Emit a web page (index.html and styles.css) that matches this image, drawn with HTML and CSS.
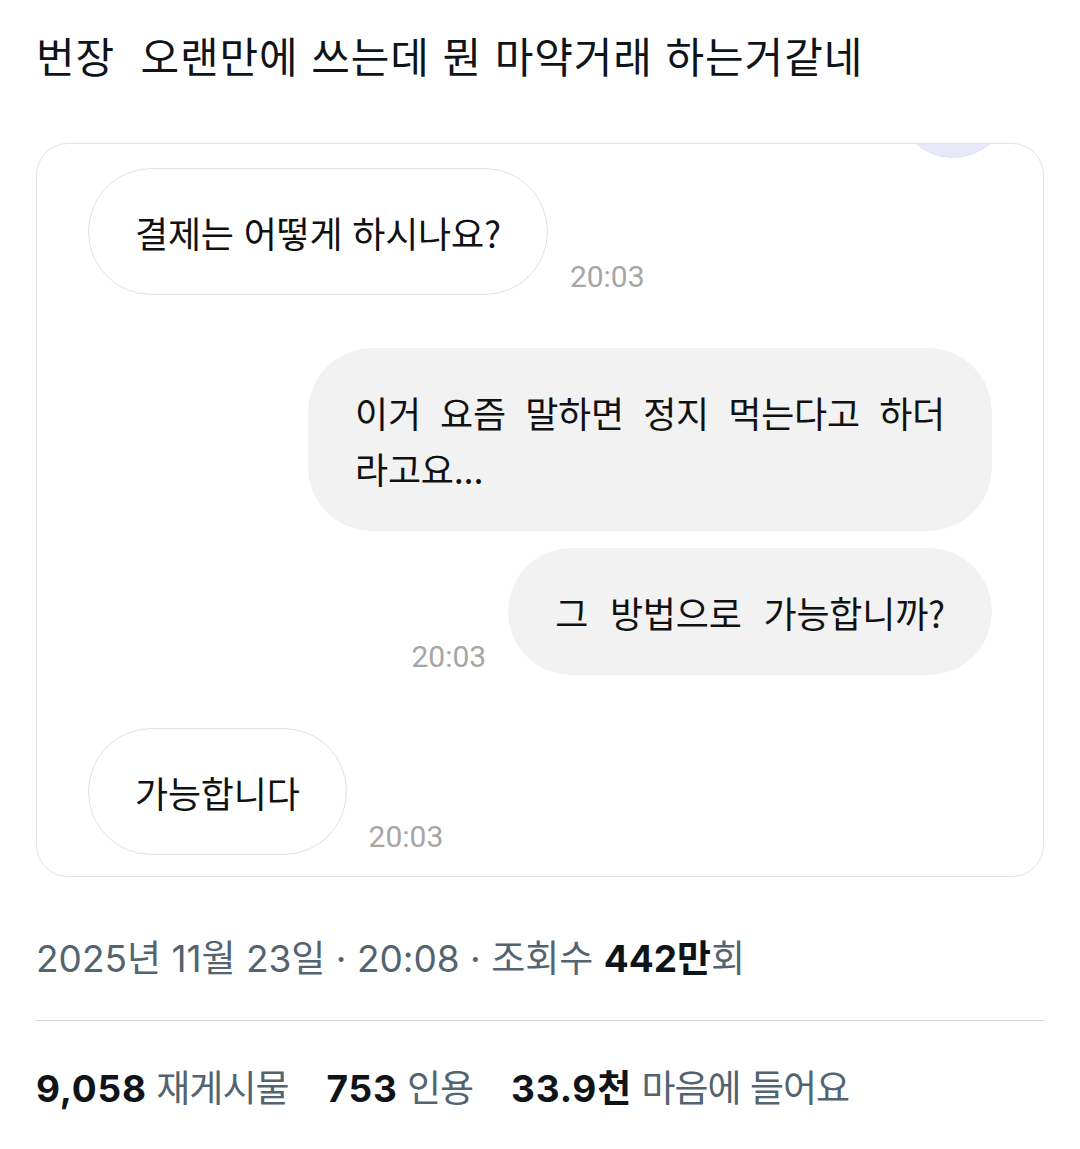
FILE: index.html
```html
<!DOCTYPE html>
<html lang="ko">
<head>
<meta charset="utf-8">
<link rel="stylesheet" href="styles.css">
</head>
<body>
<main class="post">
  <h1 class="title">번장&nbsp; 오랜만에 쓰는데 뭔 마약거래 하는거같네</h1>
  <div class="card">
    <div class="avatar"></div>
    <div class="row left">
      <div class="bubble out">결제는 어떻게 하시나요?</div>
      <span class="time">20:03</span>
    </div>
    <div class="row right gap-big">
      <div class="bubble grey wide">이거 요즘 말하면 정지 먹는다고 하더 라고요...</div>
    </div>
    <div class="row right gap-small">
      <span class="time">20:03</span>
      <div class="bubble grey spaced">그 방법으로 가능합니까?</div>
    </div>
    <div class="row left gap-big">
      <div class="bubble out">가능합니다</div>
      <span class="time">20:03</span>
    </div>
  </div>
  <div class="meta">2025년 11월 23일 · 20:08 · 조회수 <b>442만</b>회</div>
  <hr class="divider">
  <div class="stats">
    <span class="stat"><b>9,058</b> 재게시물</span>
    <span class="stat"><b>753</b> 인용</span>
    <span class="stat"><b>33.9천</b> 마음에 들어요</span>
  </div>
</main>
</body>
</html>
```

FILE: styles.css
```css
* { box-sizing: border-box; }
html, body { margin: 0; padding: 0; background: #fff; }
body {
  font-family: "Noto Sans CJK KR", "Noto Sans", sans-serif;
  color: #0f1419;
}
.post { padding: 0 36px; }
.title {
  margin: 0;
  padding-top: 26px;
  font-size: 42px;
  line-height: 58px;
  font-weight: 400;
  letter-spacing: 0.9px;
  color: #0f1419;
}
.card {
  position: relative;
  overflow: hidden;
  margin-top: 59px;
  border: 1px solid #e3e3e3;
  border-radius: 32px;
  padding: 24px 51px 21px;
  display: flex;
  flex-direction: column;
}
.avatar {
  position: absolute;
  left: 859px;
  top: -100px;
  width: 114px;
  height: 114px;
  border-radius: 50%;
  background: #e7e9f8;
  border: 1px solid #dfe2f3;
}
.row {
  display: flex;
  align-items: flex-end;
  gap: 22px;
}
.row.right { justify-content: flex-end; }
.gap-big { margin-top: 53px; }
.gap-small { margin-top: 17px; }
.bubble {
  font-size: 36px;
  line-height: 56px;
  letter-spacing: -0.2px;
  color: #111;
  padding: 34.5px 46px;
  border-radius: 64px;
  border: 1px solid transparent;
  word-break: keep-all;
}
.bubble.out {
  background: #fff;
  border-color: #e0e0e0;
}
.bubble.grey {
  background: #f2f2f2;
  border-color: #f2f2f2;
}
.bubble.wide {
  width: 684px;
  text-align: justify;
  text-align-last: left;
}
.bubble.spaced { word-spacing: 12px; }
.time {
  font-family: Roboto, "Liberation Sans", sans-serif;
  font-size: 30px;
  line-height: 30px;
  color: #a6a6a6;
  margin-bottom: 3px;
}
.meta {
  margin-top: 58px;
  font-family: Inter, "Noto Sans CJK KR", sans-serif;
  font-size: 37px;
  line-height: 48px;
  color: #536471;
}
.meta b { color: #0f1419; font-weight: 700; }
.divider {
  margin: 37px 0 0;
  border: 0;
  border-top: 1px solid #cfd9de;
}
.stats {
  margin-top: 44px;
  display: flex;
  gap: 38px;
  font-family: Inter, "Noto Sans CJK KR", sans-serif;
  font-size: 37px;
  line-height: 48px;
  letter-spacing: -1px;
  color: #536471;
}
.stats b { color: #0f1419; font-weight: 700; letter-spacing: 0.8px; }
```
